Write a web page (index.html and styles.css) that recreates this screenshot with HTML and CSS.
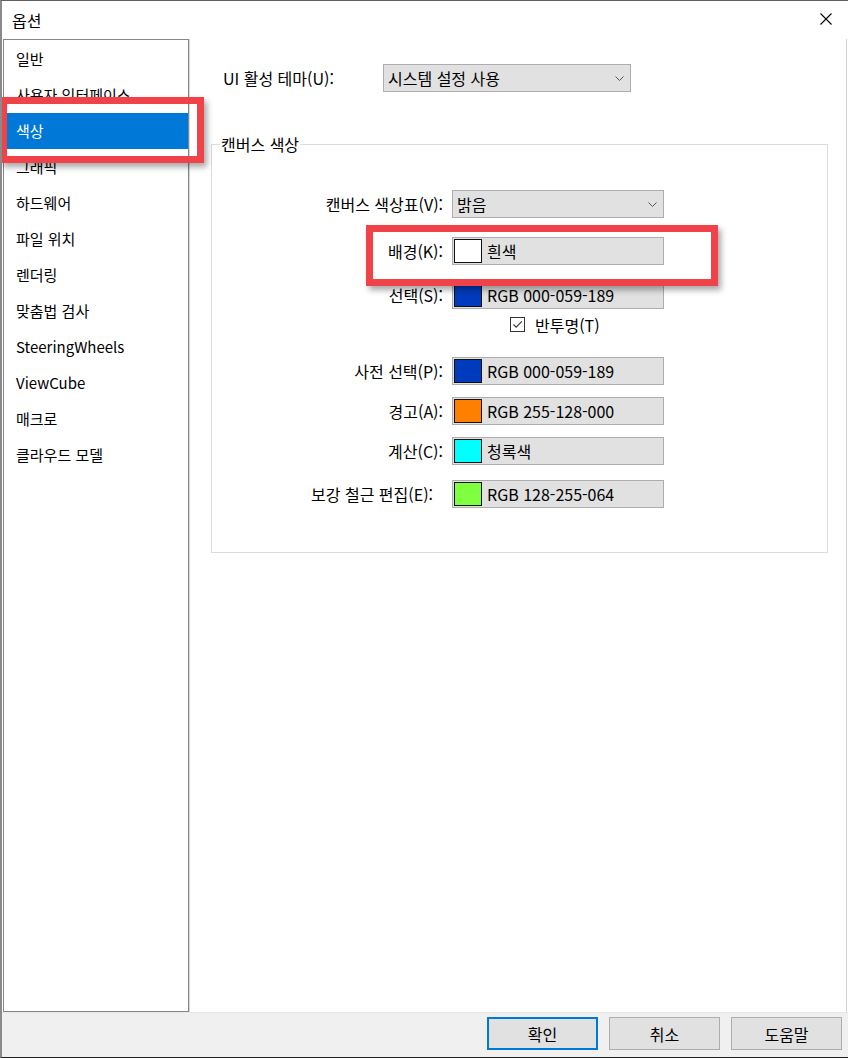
FILE: index.html
```html
<!DOCTYPE html>
<html lang="ko">
<head>
<meta charset="utf-8">
<title>옵션</title>
<link rel="stylesheet" href="styles.css">
</head>
<body>
<div class="window">
  <div class="titlebar">
    <span class="title">옵션</span>
    <svg class="close" width="12" height="12" viewBox="0 0 12 12"><path d="M0.5 0.5 L11.5 11.5 M11.5 0.5 L0.5 11.5" stroke="#000" stroke-width="1.1" fill="none"/></svg>
  </div>
  <div class="main">
    <ul class="nav">
      <li>일반</li>
      <li>사용자 인터페이스</li>
      <li class="active">색상</li>
      <li>그래픽</li>
      <li>하드웨어</li>
      <li>파일 위치</li>
      <li>렌더링</li>
      <li>맞춤법 검사</li>
      <li>SteeringWheels</li>
      <li>ViewCube</li>
      <li>매크로</li>
      <li>클라우드 모델</li>
    </ul>
    <div class="panel">
      <div class="theme-row">
        <span class="label">UI 활성 테마(U):</span>
        <div class="select">
          <span>시스템 설정 사용</span>
          <svg class="chev" width="9" height="5" viewBox="0 0 9 5"><path d="M0.5 0.5 L4.5 4.5 L8.5 0.5" stroke="#555" stroke-width="1" fill="none"/></svg>
        </div>
      </div>
      <fieldset class="group">
        <legend>캔버스 색상</legend>
        <div class="row">
          <span class="label">캔버스 색상표(V):</span>
          <div class="select">
            <span>밝음</span>
            <svg class="chev" width="9" height="5" viewBox="0 0 9 5"><path d="M0.5 0.5 L4.5 4.5 L8.5 0.5" stroke="#555" stroke-width="1" fill="none"/></svg>
          </div>
        </div>
        <div class="row row-bg">
          <span class="label">배경(K):</span>
          <div class="field"><span class="swatch" style="background:#ffffff"></span><span>흰색</span></div>
        </div>
        <div class="row row-sel">
          <span class="label">선택(S):</span>
          <div class="field"><span class="swatch" style="background:rgb(0,59,189)"></span><span>RGB 000-059-189</span></div>
        </div>
        <div class="check-row">
          <span class="checkbox"><svg width="13" height="13" viewBox="0 0 13 13"><path d="M2.5 6.5 L5.2 9.2 L10.8 3.3" stroke="#333" stroke-width="1.1" fill="none"/></svg></span>
          <span>반투명(T)</span>
        </div>
        <div class="row row-pre">
          <span class="label">사전 선택(P):</span>
          <div class="field"><span class="swatch" style="background:rgb(0,59,189)"></span><span>RGB 000-059-189</span></div>
        </div>
        <div class="row">
          <span class="label">경고(A):</span>
          <div class="field"><span class="swatch" style="background:rgb(255,128,0)"></span><span>RGB 255-128-000</span></div>
        </div>
        <div class="row">
          <span class="label">계산(C):</span>
          <div class="field"><span class="swatch" style="background:#00ffff"></span><span>청록색</span></div>
        </div>
        <div class="row row-rebar">
          <span class="label">보강 철근 편집(E):</span>
          <div class="field"><span class="swatch" style="background:rgb(128,255,64)"></span><span>RGB 128-255-064</span></div>
        </div>
      </fieldset>
    </div>
  </div>
  <div class="footer">
    <button class="btn primary">확인</button>
    <button class="btn">취소</button>
    <button class="btn">도움말</button>
  </div>
  <div class="mark mark-nav"></div>
  <div class="mark mark-bg"></div>
</div>
</body>
</html>
```

FILE: styles.css
```css
* { box-sizing: border-box; }
html, body { margin: 0; padding: 0; background: #fff; }
body {
  font-family: "Noto Sans CJK KR", "Noto Sans", sans-serif;
  font-size: 16px;
  line-height: 20px;
  color: #000;
}
.window {
  position: relative;
  width: 848px;
  height: 1058px;
  border-top: 1px solid #5f5f5f;
  border-left: 2px solid #8a8a8a;
  border-bottom: 1px solid #1e1e1e;
  display: flex;
  flex-direction: column;
  background: #fff;
  overflow: hidden;
}
.titlebar {
  flex: none;
  height: 38px;
  display: flex;
  align-items: center;
  justify-content: space-between;
  padding: 0 16px 0 10px;
}
.title { font-size: 16px; }
.close { display: block; margin-top: -3px; }
.main {
  flex: 1;
  min-height: 0;
  display: flex;
  padding: 0 1px;
}
.nav {
  list-style: none;
  margin: 0;
  padding: 0;
  width: 186px;
  flex: none;
  border: 1px solid #828790;
  box-shadow: 1px 0 0 #d6d6d6;
  font-size: 15px;
}
.nav li {
  height: 36px;
  line-height: 36px;
  padding-left: 12px;
  white-space: nowrap;
}
.nav li:first-child { margin-top: 1px; }
.nav li.active { background: #0078d7; color: #fff; }
.panel {
  flex: 1;
  border-right: 1px solid #d4d4d4;
  padding-top: 25px;
}
.theme-row {
  display: grid;
  grid-template-columns: 160px 248px;
  align-items: center;
  margin-left: 34px;
}
.select {
  height: 28px;
  border: 1px solid #adadad;
  background: #e1e1e1;
  display: flex;
  align-items: center;
  justify-content: space-between;
  padding: 0 6px 0 4px;
}
.chev { display: block; }
.group {
  margin: 42px 0 0 22px;
  width: 617px;
  min-width: 0;
  padding: 36px 0 44px;
  border: 1px solid #dcdcdc;
}
.group legend {
  margin-left: 8px;
  padding: 0 1px;
  font-size: 16px;
  line-height: 20px;
}
.row {
  display: grid;
  grid-template-columns: 231px 212px;
  column-gap: 9px;
  align-items: center;
  margin-top: 12px;
}
.row:first-of-type { margin-top: 0; }
.row .label { text-align: right; white-space: nowrap; }
.row-bg { margin-top: 19px; }
.row-sel { margin-top: 16px; }
.row-pre { margin-top: 25px; }
.row-rebar { margin-top: 15px; }
.row-rebar .label { padding-right: 10px; }
.field {
  height: 28px;
  border: 1px solid #adadad;
  background: #e1e1e1;
  display: flex;
  align-items: center;
  padding-left: 1px;
}
.swatch {
  flex: none;
  width: 28px;
  height: 24px;
  border: 1px solid #111;
  margin-right: 5px;
}
.check-row {
  display: flex;
  align-items: center;
  gap: 10px;
  margin: 8px 0 0 298px;
  height: 15px;
}
.checkbox {
  width: 15px;
  height: 15px;
  border: 1px solid #333;
  background: #fff;
  display: flex;
  align-items: center;
  justify-content: center;
}
.checkbox svg { display: block; }
.footer {
  flex: none;
  height: 45px;
  background: #f0f0f0;
  border-top: 1px solid #e6e6e6;
  display: flex;
  justify-content: flex-end;
  gap: 11px;
  padding: 4px 6px 0 0;
}
.btn {
  width: 111px;
  height: 33px;
  padding: 0;
  border: 1px solid #adadad;
  background: #e1e1e1;
  font: inherit;
  color: #000;
}
.btn.primary { border: 2px solid #0078d7; }
.mark {
  position: absolute;
  border: 7px solid #ef4349;
  box-shadow: 3px 4px 6px rgba(0, 0, 0, 0.35);
  pointer-events: none;
}
.mark-nav { left: -2px; top: 96px; width: 204px; height: 66px; }
.mark-bg { left: 364px; top: 224px; width: 352px; height: 61px; }
```
